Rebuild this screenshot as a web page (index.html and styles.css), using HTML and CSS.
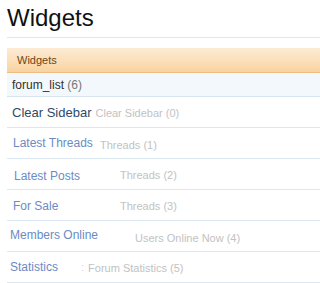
FILE: index.html
```html
<!DOCTYPE html>
<html>
<head>
<meta charset="utf-8">
<link rel="stylesheet" href="styles.css">
</head>
<body>
<h1 class="title">Widgets</h1>
<div class="panel">
  <div class="panel-head">Widgets</div>
  <div class="group">forum_list <span class="count">(6)</span></div>
  <ul class="list">
    <li class="item item--1"><a class="name">Clear Sidebar</a><span class="meta">Clear Sidebar (0)</span></li>
    <li class="item item--2"><a class="name">Latest Threads</a><span class="meta">Threads (1)</span></li>
    <li class="item item--3"><a class="name">Latest Posts</a><span class="meta">Threads (2)</span></li>
    <li class="item item--4"><a class="name">For Sale</a><span class="meta">Threads (3)</span></li>
    <li class="item item--5"><a class="name">Members Online</a><span class="meta">Users Online Now (4)</span></li>
    <li class="item item--6"><a class="name">Statistics</a><span class="colon">:</span><span class="meta">Forum Statistics (5)</span></li>
  </ul>
</div>
</body>
</html>
```
FILE: styles.css
```css
html, body {
  margin: 0;
  padding: 0;
  background: #ffffff;
}
body {
  padding-left: 7px;
  font-family: "Liberation Sans", Arial, sans-serif;
  overflow: hidden;
}
.title {
  margin: 0 0 10px 0;
  padding: 3px 0 4px 0;
  font-size: 24px;
  line-height: 30px;
  font-weight: normal;
  color: #111111;
  border-bottom: 1px solid #dbe6ef;
}
.panel-head {
  height: 24px;
  line-height: 25px;
  padding-left: 10px;
  font-size: 11px;
  color: #6d4614;
  background: linear-gradient(to bottom, #fdebd3 0%, #fbe0bb 50%, #f8d3a0 100%);
  border-bottom: 1px solid #efbd7f;
}
.group {
  height: 23px;
  line-height: 24px;
  padding-left: 5px;
  font-size: 12px;
  color: #2f2f2f;
  background: #f3f8fc;
  border-bottom: 1px solid #d6e4ef;
}
.count {
  color: #777777;
}
.list {
  list-style: none;
  margin: 0;
  padding: 0;
}
.item {
  display: flex;
  align-items: center;
  height: 30px;
  border-bottom: 1px solid #dce8f1;
  font-size: 12px;
}
.name {
  color: #6b8bc4;
  font-size: 12px;
}
.meta {
  color: #c2c2c2;
  font-size: 11px;
}
.colon {
  color: #d6d6d6;
  font-size: 11px;
  margin-left: 23px;
  margin-right: 4px;
}
.item--1 { padding-left: 5px; }
.item--1 .name { color: #2e4a68; font-size: 13px; margin-right: 4px; }
.item--1 .meta { margin-top: 1px; }
.item--2 { padding-left: 6px; }
.item--2 .name { width: 87px; margin-top: -1px; }
.item--2 .meta { margin-top: 4px; }
.item--3 { padding-left: 7px; }
.item--3 .name { width: 106px; margin-top: 4px; }
.item--3 .meta { margin-top: 2px; }
.item--4 { padding-left: 6px; }
.item--4 .name { width: 107px; margin-top: 2px; }
.item--4 .meta { margin-top: 2px; }
.item--5 { padding-left: 3px; }
.item--5 .name { width: 125px; margin-top: -3px; }
.item--5 .meta { margin-top: 3px; }
.item--6 { padding-left: 3px; }
.item--6 .name { margin-top: 0; }
.item--6 .meta { margin-top: 2px; }
```
